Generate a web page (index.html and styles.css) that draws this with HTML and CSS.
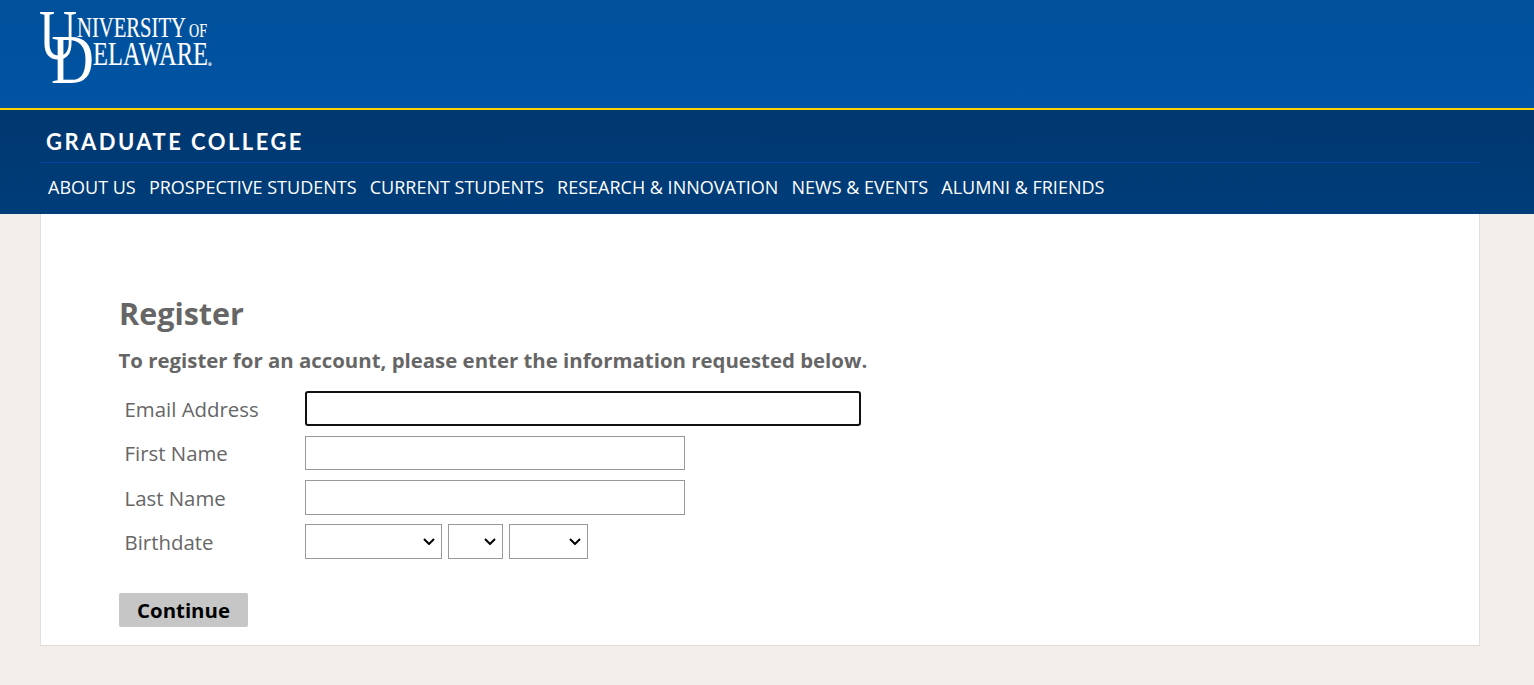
FILE: index.html
```html
<!DOCTYPE html>
<html lang="en">

<head>
	<meta name="viewport" content="width=device-width, initial-scale=1">
	<title>Register - Graduate College</title>
	<link rel="stylesheet" href="styles.css">
</head>

<body>
	<header class="top-bar">
		<a href="#" class="logo" aria-label="University of Delaware">
			<svg width="190" height="100" viewBox="0 -8 190 100">
				<text class="logo-big" x="-1" y="51" font-size="72" textLength="38" lengthAdjust="spacingAndGlyphs">U</text>
				<text class="logo-big" x="11" y="75" font-size="70" textLength="43" lengthAdjust="spacingAndGlyphs">D</text>
				<text class="logo-word" x="37" y="29" font-size="30" textLength="109" lengthAdjust="spacingAndGlyphs">NIVERSITY</text>
				<text class="logo-word" x="149" y="29" font-size="18" textLength="18" lengthAdjust="spacingAndGlyphs">OF</text>
				<text class="logo-word" x="53" y="57" font-size="33" textLength="115" lengthAdjust="spacingAndGlyphs">ELAWARE</text>
				<text class="logo-word" x="168" y="58" font-size="5">®</text>
			</svg>
		</a>
	</header>
	<div class="college-bar">
		<div class="college-name">GRADUATE COLLEGE</div>
		<nav class="main-nav">
			<a href="#">ABOUT US</a>
			<a href="#">PROSPECTIVE STUDENTS</a>
			<a href="#">CURRENT STUDENTS</a>
			<a href="#">RESEARCH &amp; INNOVATION</a>
			<a href="#">NEWS &amp; EVENTS</a>
			<a href="#">ALUMNI &amp; FRIENDS</a>
		</nav>
	</div>
	<main class="content">
		<h1>Register</h1>
		<p class="intro">To register for an account, please enter the information requested below.</p>
		<form class="register-form">
			<div class="form-row">
				<label for="email">Email Address</label>
				<input type="text" id="email" class="text-input email-input">
			</div>
			<div class="form-row short-row">
				<label for="first">First Name</label>
				<input type="text" id="first" class="text-input">
			</div>
			<div class="form-row">
				<label for="last">Last Name</label>
				<input type="text" id="last" class="text-input">
			</div>
			<div class="form-row">
				<label for="month">Birthdate</label>
				<div class="date-selects">
					<select id="month" class="month-select" aria-label="Month"></select>
					<select class="day-select" aria-label="Day"></select>
					<select class="year-select" aria-label="Year"></select>
				</div>
			</div>
			<button type="button" class="continue-btn">Continue</button>
		</form>
	</main>
</body>

</html>
```

FILE: styles.css
```css
html,
body {
	margin: 0;
	padding: 0;
}

body {
	font-family: "Open Sans", sans-serif;
	background: #f2efeb;
	color: #666;
}

.top-bar {
	height: 108px;
	box-sizing: border-box;
	padding-left: 40px;
	background: linear-gradient(#00509b, #0054a3);
}

.logo {
	display: block;
	width: 190px;
	height: 100px;
}

.logo svg {
	overflow: visible;
}

.logo-big,
.logo-word {
	font-family: "Liberation Serif", serif;
	fill: #fff;
}

.logo-word {
	stroke: #fff;
	stroke-width: 0.15;
}

.college-bar {
	height: 106px;
	box-sizing: border-box;
	border-top: 2px solid #ffd200;
	background: linear-gradient(#00376f, #003d7a);
	padding: 0 54px 0 40px;
}

.college-name {
	font-family: Lato, sans-serif;
	font-weight: 700;
	font-size: 22px;
	line-height: 26px;
	letter-spacing: 2.45px;
	color: #fff;
	padding: 19px 0 0 6px;
	height: 53px;
	box-sizing: border-box;
	border-bottom: 1px solid #0644a8;
}

.main-nav {
	display: flex;
	gap: 13.2px;
	padding: 11px 0 0 8px;
}

.main-nav a {
	color: #fff;
	text-decoration: none;
	font-size: 18px;
	line-height: 26px;
}

.content {
	box-sizing: border-box;
	width: 1440px;
	height: 432px;
	margin: 0 0 0 40px;
	padding: 79px 78px 0;
	background: #fff;
	border: 1px solid #e2dfda;
	border-top: 0;
}

h1 {
	margin: 0;
	font-size: 30.5px;
	line-height: 41px;
	font-weight: 700;
}

.intro {
	margin: 13px 0 18px -0.5px;
	font-size: 20.4px;
	line-height: 26px;
	font-weight: 700;
}

.register-form {
	display: flex;
	flex-direction: column;
	align-items: flex-start;
}

.form-row {
	display: flex;
	align-items: center;
	height: 35px;
	margin-bottom: 10px;
}

.form-row:nth-child(3) {
	margin-bottom: 9px;
}

.short-row {
	height: 34px;
}

.form-row label {
	width: 186px;
	padding-left: 5.5px;
	box-sizing: border-box;
	font-size: 20.4px;
}

.form-row:first-child label {
	padding-top: 1px;
}

.text-input {
	box-sizing: border-box;
	width: 380px;
	height: 100%;
	border: 1px solid #999;
	border-radius: 0;
	padding: 0 6px;
	background: #fff;
	outline: none;
}

.email-input {
	width: 556px;
	border: 2px solid #101010;
	border-radius: 3px;
}

.date-selects {
	display: flex;
	gap: 6px;
}

.date-selects select {
	box-sizing: border-box;
	height: 35px;
	border: 1px solid #999;
	border-radius: 0;
	appearance: none;
	background: #fff url("data:image/svg+xml,%3Csvg xmlns='http://www.w3.org/2000/svg' width='12' height='7'%3E%3Cpath d='M1 1l5 5 5-5' fill='none' stroke='%23000' stroke-width='2'/%3E%3C/svg%3E") no-repeat right 6px center;
}

.month-select {
	width: 137px;
}

.day-select {
	width: 55px;
}

.year-select {
	width: 79px;
}

.continue-btn {
	display: block;
	margin-top: 24px;
	width: 129px;
	height: 34px;
	padding: 0;
	border: none;
	border-radius: 2px;
	background: #c6c6c6;
	color: #000;
	font-family: "Open Sans", sans-serif;
	font-size: 20.4px;
	font-weight: 700;
}
```
